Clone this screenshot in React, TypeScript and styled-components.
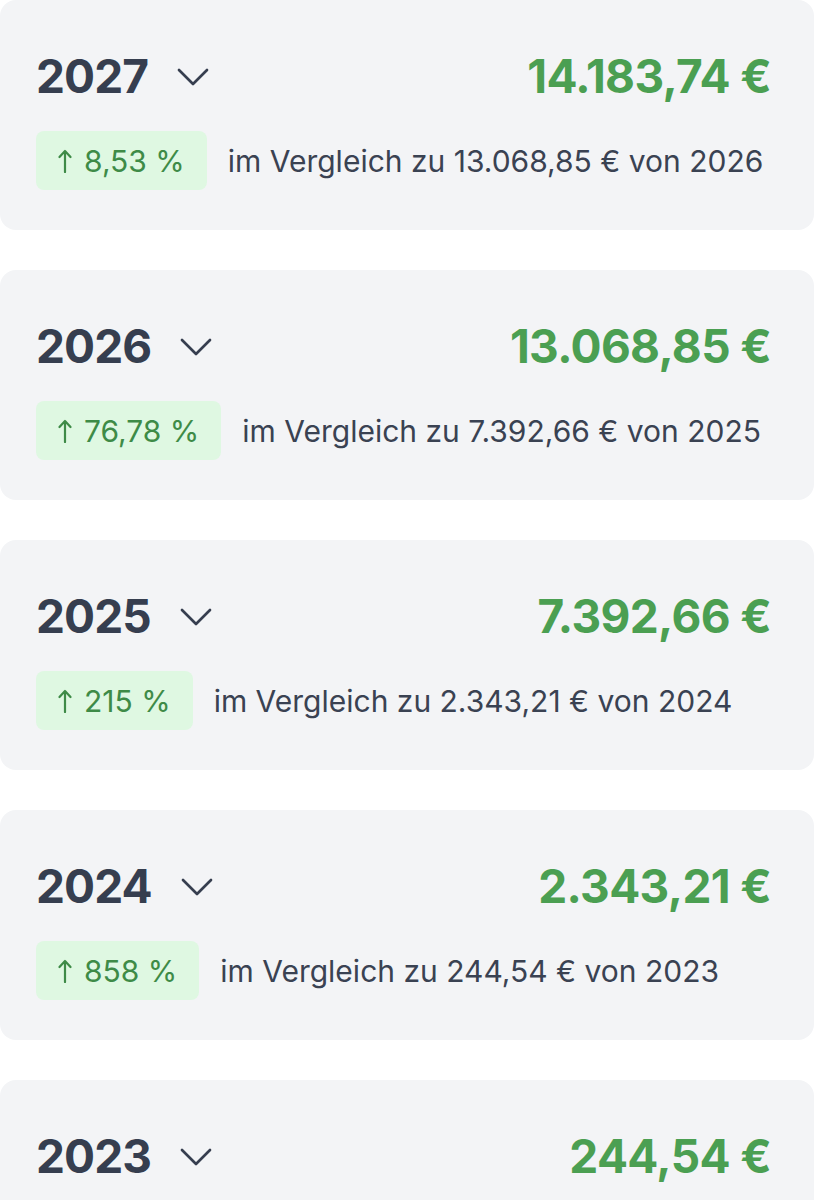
import React from "react";
import styled, { createGlobalStyle } from "styled-components";

const Global = createGlobalStyle`
  html, body { margin: 0; padding: 0; background: #ffffff; }
  body { font-family: Inter, "Noto Sans", "Liberation Sans", sans-serif; }
`;

const Page = styled.div`
  display: flex;
  flex-direction: column;
  gap: 40px;
  width: 814px;
  height: 1200px;
  overflow: hidden;
`;

const Card = styled.section`
  flex: none;
  background: #f3f4f6;
  border-radius: 16px;
  padding: 48px 43px 40px 36px;
  display: flex;
  flex-direction: column;
  gap: 27px;
`;

const Header = styled.div`
  display: flex;
  align-items: center;
  justify-content: space-between;
  height: 56px;
`;

const YearWrap = styled.div`
  display: flex;
  align-items: center;
  gap: 29px;
`;

const Year = styled.span`
  font-size: 46px;
  line-height: 56px;
  font-weight: 700;
  color: #363e4f;
  letter-spacing: -0.9px;
`;

const Amount = styled.span`
  font-size: 46px;
  line-height: 56px;
  font-weight: 700;
  color: #4b9f52;
  letter-spacing: -0.65px;
`;

const Chevron = styled.svg`
  width: 32px;
  height: 18px;
  margin-top: 2px;
`;

const Compare = styled.div`
  display: flex;
  align-items: center;
  gap: 21px;
`;

const Badge = styled.span`
  display: inline-flex;
  align-items: center;
  gap: 12px;
  height: 59px;
  padding: 0 22px;
  border-radius: 8px;
  background: #dff8e2;
  color: #3e8b47;
  font-size: 30px;
  font-weight: 400;
`;

const Arrow = styled.svg`
  width: 14px;
  height: 24px;
`;

const CompareText = styled.span`
  font-size: 30px;
  color: #3a4252;
  font-weight: 400;
`;

type Row = {
  year: string;
  amount: string;
  pct?: string;
  prev?: string;
  prevYear?: string;
};

const rows: Row[] = [
  { year: "2027", amount: "14.183,74 €", pct: "8,53 %", prev: "13.068,85 €", prevYear: "2026" },
  { year: "2026", amount: "13.068,85 €", pct: "76,78 %", prev: "7.392,66 €", prevYear: "2025" },
  { year: "2025", amount: "7.392,66 €", pct: "215 %", prev: "2.343,21 €", prevYear: "2024" },
  { year: "2024", amount: "2.343,21 €", pct: "858 %", prev: "244,54 €", prevYear: "2023" },
  { year: "2023", amount: "244,54 €" },
];

function ChevronDown() {
  return (
    <Chevron viewBox="0 0 32 18" fill="none">
      <polyline
        points="2,2 16,16 30,2"
        stroke="#363e4f"
        strokeWidth="2.7"
        strokeLinecap="round"
        strokeLinejoin="round"
      />
    </Chevron>
  );
}

function UpArrow() {
  return (
    <Arrow viewBox="0 0 14 24" fill="none">
      <path
        d="M7 23V2M1.5 8L7 2l5.5 6"
        stroke="#3e8b47"
        strokeWidth="2.2"
        strokeLinecap="round"
        strokeLinejoin="round"
      />
    </Arrow>
  );
}

export default function App() {
  return (
    <>
      <Global />
      <Page>
        {rows.map((r) => (
          <Card key={r.year}>
            <Header>
              <YearWrap>
                <Year>{r.year}</Year>
                <ChevronDown />
              </YearWrap>
              <Amount>{r.amount}</Amount>
            </Header>
            {r.pct && (
              <Compare>
                <Badge>
                  <UpArrow />
                  {r.pct}
                </Badge>
                <CompareText>
                  im Vergleich zu {r.prev} von {r.prevYear}
                </CompareText>
              </Compare>
            )}
          </Card>
        ))}
      </Page>
    </>
  );
}
